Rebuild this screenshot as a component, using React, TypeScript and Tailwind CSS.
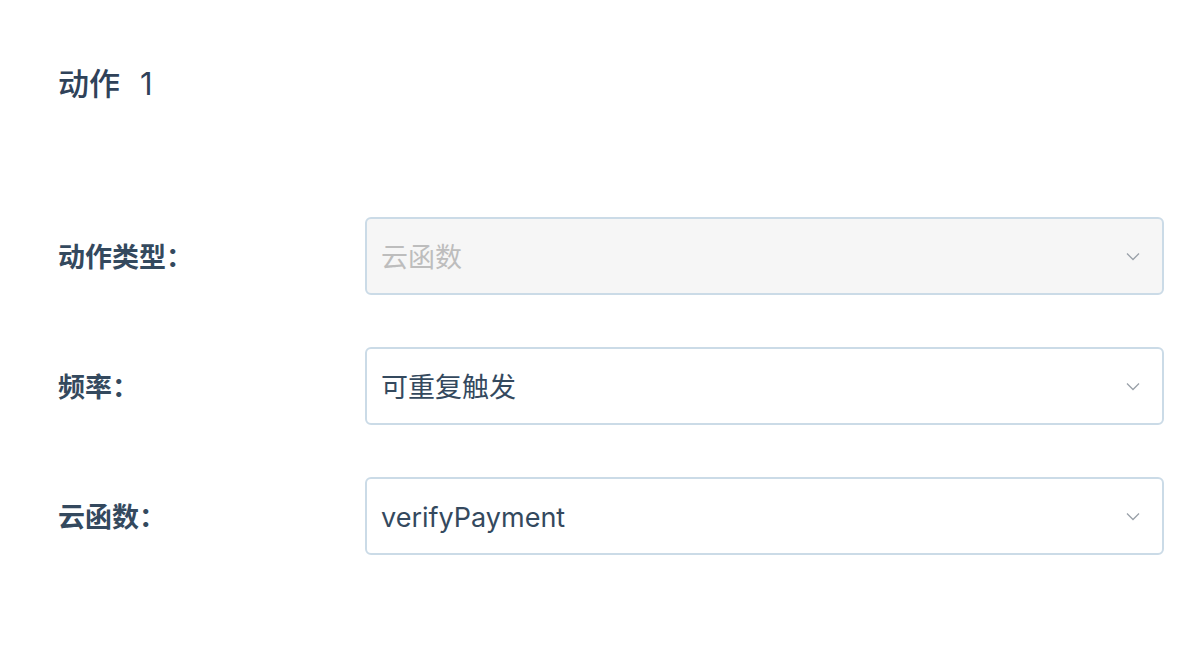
import React from "react";

const Chevron = () => (
  <svg width="14" height="9" viewBox="0 0 14 9" fill="none" className="shrink-0">
    <path d="M1 1.5 L7 7.5 L13 1.5" stroke="#9aa1a9" strokeWidth="1.3" />
  </svg>
);

const Row = ({ label, value, disabled }: { label: string; value: string; disabled?: boolean }) => (
  <div className="flex items-center h-[78px]">
    <div className="w-[365px] shrink-0 pl-[58px] pt-[4px] text-[27px] font-bold text-[#34495e]">{label}</div>
    <div
      className={`flex-1 mr-[38px] h-[78px] rounded-[6px] border-2 border-[#cbdbe7] flex items-center justify-between pl-[14px] pr-[22px] ${
        disabled ? "bg-[#f6f6f6]" : "bg-white"
      }`}
    >
      <span className={`pt-[4px] text-[27px] ${disabled ? "text-[#bdbdbd]" : "text-[#34495e]"}`}>{value}</span>
      <Chevron />
    </div>
  </div>
);

export default function App() {
  return (
    <div
      className="w-[1202px] h-[664px] bg-white"
      style={{ fontFamily: 'Inter, "Noto Sans CJK SC", sans-serif' }}
    >
      <div className="pt-[62px] pl-[58px] text-[31px] leading-[44px] text-[#2f4259] font-medium">
        动作<span className="ml-[20px] font-normal">1</span>
      </div>
      <div className="mt-[111px] flex flex-col gap-[52px]">
        <Row label="动作类型：" value="云函数" disabled />
        <Row label="频率：" value="可重复触发" />
        <Row label="云函数：" value="verifyPayment" />
      </div>
    </div>
  );
}
